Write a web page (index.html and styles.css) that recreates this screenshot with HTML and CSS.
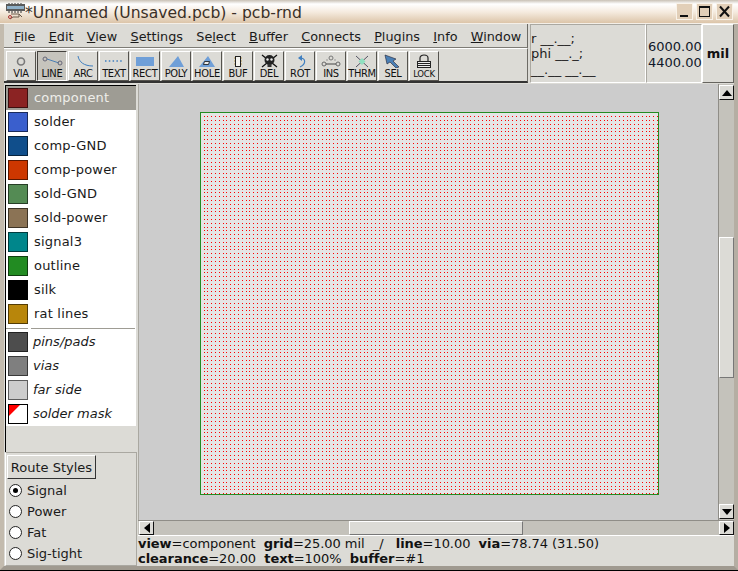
FILE: index.html
```html
<!DOCTYPE html>
<html lang="en">
<head>
<meta charset="utf-8">
<title>pcb-rnd</title>
<link rel="stylesheet" href="styles.css">
</head>
<body>
<div class="window">
  <header class="titlebar">
    <svg class="appicon" width="19" height="17" viewBox="0 0 19 17"><rect x="0" y="1" width="19" height="7" fill="#5a5a5a"/><rect x="1" y="3" width="17" height="3" fill="#8fb0c8"/><path d="M3 1v-1M6 1v-1M9 1v-1M12 1v-1M15 1v-1M3 8v2M6 8v2M9 8v2M12 8v2M15 8v2" stroke="#333"/><path d="M5 11h8v3h-6M7 14l-3 2M13 11l3 3" stroke="#6a5a4a" fill="none"/><circle cx="4" cy="14" r="1.500" fill="none" stroke="#a33"/></svg>
    <span class="wintitle">*Unnamed (Unsaved.pcb) - pcb-rnd</span>
    <div class="winbtns">
      <span class="winbtn"><svg width="17" height="17" viewBox="0 0 17 17"><rect x="4" y="12" width="8" height="2" fill="#111"/></svg></span>
      <span class="winbtn"><svg width="17" height="17" viewBox="0 0 17 17"><rect x="3.500" y="3.500" width="10" height="10" fill="none" stroke="#111"/><rect x="3" y="3" width="11" height="2" fill="#111"/></svg></span>
      <span class="winbtn"><svg width="17" height="17" viewBox="0 0 17 17"><path d="M4 3.500L13 13.500M13 3.500L4 13.500" stroke="#111" stroke-width="2"/></svg></span>
    </div>
  </header>

  <div class="topbar">
    <div class="bars">
      <nav class="menubar">
        <span class="menu"><u>F</u>ile</span>
        <span class="menu"><u>E</u>dit</span>
        <span class="menu"><u>V</u>iew</span>
        <span class="menu"><u>S</u>ettings</span>
        <span class="menu">Se<u>l</u>ect</span>
        <span class="menu"><u>B</u>uffer</span>
        <span class="menu"><u>C</u>onnects</span>
        <span class="menu"><u>P</u>lugins</span>
        <span class="menu"><u>I</u>nfo</span>
        <span class="menu"><u>W</u>indow</span>
      </nav>
      <div class="toolbar">
        <div class="tool"><svg class="ico" width="24" height="14" viewBox="0 0 24 14"><circle cx="12" cy="7.500" r="3.500" fill="none" stroke="#7a7a7a" stroke-width="1.600"/></svg><span class="tlabel">VIA</span></div>
        <div class="tool pressed"><svg class="ico" width="24" height="14" viewBox="0 0 24 14"><path d="M7 5L19 9" stroke="#4a7fb5"/><circle cx="5" cy="5" r="2" fill="none" stroke="#667"/><circle cx="20" cy="9" r="2" fill="none" stroke="#667"/></svg><span class="tlabel">LINE</span></div>
        <div class="tool"><svg class="ico" width="24" height="14" viewBox="0 0 24 14"><path d="M7 2C8 8 13 12 22 12" fill="none" stroke="#3f7fc0"/></svg><span class="tlabel">ARC</span></div>
        <div class="tool"><svg class="ico" width="24" height="14" viewBox="0 0 24 14"><path d="M3 7h19" stroke="#3f7fc0" stroke-dasharray="1.500 2.300" stroke-width="1.500"/></svg><span class="tlabel">TEXT</span></div>
        <div class="tool"><svg class="ico" width="24" height="14" viewBox="0 0 24 14"><rect x="3" y="3" width="18" height="9" fill="#6f9fd8"/></svg><span class="tlabel">RECT</span></div>
        <div class="tool"><svg class="ico" width="24" height="14" viewBox="0 0 24 14"><path d="M5 13L14 2L20 13Z" fill="#6f9fd8"/></svg><span class="tlabel">POLY</span></div>
        <div class="tool"><svg class="ico" width="24" height="14" viewBox="0 0 24 14"><path d="M4 13L13 2L20 13Z" fill="#6f9fd8"/><path d="M9.500 7.500h5l-1 3h-5z" fill="#eee" stroke="#111" stroke-width=".8"/></svg><span class="tlabel">HOLE</span></div>
        <div class="tool"><svg class="ico" width="24" height="14" viewBox="0 0 24 14"><rect x="9.500" y="2.500" width="5" height="10" fill="#f4f4f0" stroke="#222"/><path d="M9 4h-1M9 7h-1M9 10h-1M15 4h1M15 7h1M15 10h1" stroke="#b89a50"/></svg><span class="tlabel">BUF</span></div>
        <div class="tool"><svg class="ico" width="24" height="14" viewBox="0 0 24 14"><path d="M5 1L20 13M20 1L5 13" stroke="#111" stroke-width="1.300"/><circle cx="12.500" cy="6" r="5" fill="#222"/><circle cx="10.500" cy="5.500" r="1.200" fill="#eee"/><circle cx="14.500" cy="5.500" r="1.200" fill="#eee"/><rect x="10.500" y="10" width="4" height="3" fill="#333"/></svg><span class="tlabel">DEL</span></div>
        <div class="tool"><svg class="ico" width="24" height="14" viewBox="0 0 24 14"><path d="M13 4C18 5 18 10 12 13" fill="none" stroke="#3f7fc0" stroke-width="1.200"/><path d="M14 1L10 4L14 7Z" fill="#3f7fc0"/></svg><span class="tlabel">ROT</span></div>
        <div class="tool"><svg class="ico" width="24" height="14" viewBox="0 0 24 14"><circle cx="12" cy="4" r="2" fill="none" stroke="#777"/><circle cx="5" cy="10" r="2" fill="none" stroke="#666"/><circle cx="19" cy="10" r="2" fill="none" stroke="#666"/><path d="M7 10H17" stroke="#444"/><path d="M9 6H7M15 6h2" stroke="#999"/></svg><span class="tlabel">INS</span></div>
        <div class="tool"><svg class="ico" width="24" height="14" viewBox="0 0 24 14"><path d="M6 2L18 13M18 2L6 13" stroke="#445" stroke-width=".9"/><path d="M12 4L15.500 7.500L12 11L8.500 7.500Z" fill="#8fe0c0"/></svg><span class="tlabel">THRM</span></div>
        <div class="tool"><svg class="ico" width="24" height="14" viewBox="0 0 24 14"><path d="M4 1L15 5L12 7L18 13L15 14L9 8L6 10Z" fill="#4a7fb5" stroke="#223" stroke-width=".6"/></svg><span class="tlabel">SEL</span></div>
        <div class="tool"><svg class="ico" width="24" height="14" viewBox="0 0 24 14"><path d="M8 7V4C8 0 16 0 16 4V7" fill="none" stroke="#222" stroke-width="1.200"/><rect x="5.500" y="7.500" width="13" height="6" fill="#eee" stroke="#222"/><path d="M6 9.500h12M6 11.500h12" stroke="#222"/></svg><span class="tlabel small">LOCK</span></div>
      </div>
    </div>
    <div class="routebox">
      <div class="rline">r __.__;</div>
      <div class="rline">phi __._;</div>
      <div class="rline last">__.__ __.__</div>
    </div>
    <div class="coords"><div>6000.00</div><div>4400.00</div></div>
    <div class="unit">mil</div>
  </div>

  <div class="main">
    <aside class="side">
      <div class="layers">
        <ul class="layerlist">
          <li class="layer selected"><span class="sw c1"></span><span class="lname">component</span></li>
          <li class="layer"><span class="sw c2"></span><span class="lname">solder</span></li>
          <li class="layer"><span class="sw c3"></span><span class="lname">comp-GND</span></li>
          <li class="layer"><span class="sw c4"></span><span class="lname">comp-power</span></li>
          <li class="layer"><span class="sw c5"></span><span class="lname">sold-GND</span></li>
          <li class="layer"><span class="sw c6"></span><span class="lname">sold-power</span></li>
          <li class="layer"><span class="sw c7"></span><span class="lname">signal3</span></li>
          <li class="layer"><span class="sw c8"></span><span class="lname">outline</span></li>
          <li class="layer"><span class="sw c9"></span><span class="lname">silk</span></li>
          <li class="layer"><span class="sw c10"></span><span class="lname">rat lines</span></li>
          <li class="sep"><span></span><span></span></li>
          <li class="layer it"><span class="sw c11"></span><span class="lname">pins/pads</span></li>
          <li class="layer it"><span class="sw c12"></span><span class="lname">vias</span></li>
          <li class="layer it"><span class="sw c13"></span><span class="lname">far side</span></li>
          <li class="layer it"><span class="sw c14"></span><span class="lname">solder mask</span></li>
        </ul>
      </div>
      <div class="styles">
        <div class="stylebtn">Route Styles</div>
        <div class="radio on"><span class="dot"></span><span>Signal</span></div>
        <div class="radio"><span class="dot"></span><span>Power</span></div>
        <div class="radio"><span class="dot"></span><span>Fat</span></div>
        <div class="radio"><span class="dot"></span><span>Sig-tight</span></div>
      </div>
    </aside>

    <section class="work">
      <div class="viewrow">
        <div class="viewport"><canvas id="board" class="board" width="459" height="383"></canvas></div>
        <div class="vscroll">
          <span class="sbtn"><svg width="10" height="6" viewBox="0 0 10 6"><path d="M5 0L10 6H0Z" fill="#000"/></svg></span>
          <div class="vtrough"><div class="vthumb"></div></div>
          <span class="sbtn"><svg width="10" height="6" viewBox="0 0 10 6"><path d="M5 6L10 0H0Z" fill="#000"/></svg></span>
        </div>
      </div>
      <div class="hscroll">
        <span class="sbtn"><svg width="6" height="10" viewBox="0 0 6 10"><path d="M0 5L6 0V10Z" fill="#000"/></svg></span>
        <div class="htrough"><div class="hthumb"></div></div>
        <span class="sbtn"><svg width="6" height="10" viewBox="0 0 6 10"><path d="M6 5L0 0V10Z" fill="#000"/></svg></span>
      </div>
      <div class="status">
        <div><b>view</b>=component&nbsp; <b>grid</b>=25.00 mil&nbsp; _/&nbsp; &nbsp;<b>line</b>=10.00&nbsp; <b>via</b>=78.74 (31.50)</div>
        <div><b>clearance</b>=20.00&nbsp; <b>text</b>=100%&nbsp; <b>buffer</b>=#1</div>
      </div>
    </section>
  </div>
</div>
<script src="board.js"></script>
</body>
</html>
```
FILE: styles.css
```css
* { box-sizing: border-box; }
html, body { margin: 0; padding: 0; }
body { width: 738px; height: 571px; overflow: hidden; background: #000; font-family: "DejaVu Sans", sans-serif; color: #111; }
.window { width: 738px; height: 570px; background: #dcdbd6; border-left: 4px solid #c3bbae; border-right: 4px solid #b5aea3; border-bottom: 4px solid #a09a90; display: flex; flex-direction: column; }

.titlebar { height: 24px; margin: 0 -4px; padding: 0 5px 0 6px; display: flex; align-items: center; background: linear-gradient(#c9c1b5 0, #fff 4px, #f5ebdf 12px, #dcc5a9 100%); border-bottom: 1px solid #f4efe8; }
.appicon { flex: none; }
.wintitle { font-size: 15.600px; color: #3b3027; white-space: nowrap; flex: 1; padding-top: 2px; }
.winbtns { display: flex; gap: 3px; }
.winbtn { width: 17px; height: 17px; display: block; background: #e2cfb8; box-shadow: inset 0 0 0 1px #f9f3ea; }
.winbtn svg { display: block; }

.topbar { height: 59px; display: flex; }
.bars { width: 524px; margin-right: 2px; display: flex; flex-direction: column; }
.menubar { height: 24px; display: flex; align-items: center; gap: 13.300px; padding: 2px 0 0 10px; border-bottom: 1px solid #7d7b75; border-right: 1px solid #6d6b65; font-size: 12.800px; color: #1a1a1a; white-space: nowrap; }
.menu { display: block; }
.toolbar { height: 35px; display: flex; gap: 1px; padding: 2px 0 0 2px; background: #dcdbd6; border-top: 1px solid #fff; border-bottom: 2px solid #333; border-right: 1px solid #6d6b65; }
.tool { width: 30px; height: 30px; display: flex; flex-direction: column; align-items: center; background: #dcdbd6; border: 1px solid; border-color: #fff #55534e #55534e #fff; padding-top: 2px; }
.tool.pressed { background: #c6c4bd; border-color: #44423e #fff #fff #44423e; }
.ico { display: block; flex: none; }
.tlabel { font-family: "DejaVu Sans", sans-serif; font-stretch: condensed; font-size: 11px; line-height: 11px; color: #111; letter-spacing: -0.3px; }
.tlabel.small { font-size: 9.500px; }

.routebox { width: 116px; padding: 6px 0 0 0; border: 1px solid #fff; border-top-color: #aaa8a1; border-left-color: #aaa8a1; font-size: 13px; color: #1c1c1c; }
.rline { height: 15px; line-height: 15px; white-space: nowrap; }
.rline.last { margin-top: 1px; }
.coords { width: 56px; padding: 14px 0 0 1px; border: 1px solid #fff; border-top-color: #aaa8a1; border-left-color: #aaa8a1; font-size: 13px; line-height: 16px; color: #10182a; }
.unit { flex: 1; display: flex; align-items: center; justify-content: center; font-weight: 700; font-size: 13px; border: 1px solid; border-color: #fff #66645f #66645f #fff; color: #111; }

.main { flex: 1; display: flex; min-height: 0; }
.side { width: 134px; flex: none; display: flex; flex-direction: column; }
.layers { height: 367px; margin: 2px 2px 0 1px; border-left: 1px solid #000; border-top: 1px solid #000; }
.layerlist { list-style: none; margin: 0; padding: 0; background: #fff; font-size: 13px; color: #1a1a1a; }
.layer { height: 24px; display: flex; align-items: center; gap: 6px; padding-left: 2px; letter-spacing: 0.2px; }
.lname { display: block; padding-bottom: 2px; }
.layer.selected { background: #9e9c94; color: #eeeeea; }
.layer.it { font-style: italic; gap: 5px; letter-spacing: 0; }
.sep { height: 4px; display: flex; align-items: flex-start; gap: 3px; padding-top: 2px; }
.sep span { display: block; height: 1px; background: #9e9c94; }
.sep span:first-child { width: 22px; }
.sep span:last-child { width: 104px; }
.sw { width: 20px; height: 20px; flex: none; display: block; border: 1px solid rgba(0,0,0,.55); }
.c1 { background: #8b2323; }
.c2 { background: #3a5fcd; }
.c3 { background: #104e8b; }
.c4 { background: #cd3700; }
.c5 { background: #548b54; }
.c6 { background: #8b7355; }
.c7 { background: #00868b; }
.c8 { background: #228b22; }
.c9 { background: #000; }
.c10 { background: #b8860b; }
.c11 { background: #4d4d4d; }
.c12 { background: #7f7f7f; }
.c13 { background: #cccccc; }
.c14 { background: linear-gradient(135deg, #f00 0, #f00 30%, #fff 31%); border-color: #000; }

.styles { flex: 1; margin: 0 1px 0 1px; padding: 2px 1px 1px; border: 1px solid #fff; border-bottom-color: #aaa8a1; border-right-color: #aaa8a1; border-top-color: #aaa8a1; font-size: 13px; color: #1a1a1a; }
.stylebtn { width: 89px; height: 24px; display: flex; align-items: center; justify-content: center; border: 1px solid; border-color: #fff #333 #333 #fff; white-space: nowrap; margin-bottom: 1px; }
.radio { height: 21px; display: flex; align-items: center; gap: 5px; padding-left: 2px; }
.dot { width: 13px; height: 13px; flex: none; display: flex; align-items: center; justify-content: center; border-radius: 50%; border: 1px solid #222; background: #fff; }
.radio.on .dot::after { content: ""; width: 5px; height: 5px; border-radius: 50%; background: #000; }

.work { flex: 1; display: flex; flex-direction: column; min-width: 0; margin-top: 1px; }
.viewrow { height: 437px; display: flex; }
.viewport { width: 580px; background: #cccccc; padding: 28px 0 0 62px; border-left: 1px solid #aaa8a1; }
.board { display: block; width: 459px; height: 383px; margin-left: -1px; }
.vscroll { flex: 1; display: flex; flex-direction: column; padding: 1px 0; background: #c4c2bb; border-left: 1px solid #8f8d87; }
.sbtn { width: 15px; height: 15px; flex: none; display: flex; align-items: center; justify-content: center; background: #dcdbd6; border: 1px solid; border-color: #fff #111 #111 #fff; }
.vtrough { flex: 1; display: flex; flex-direction: column; padding-top: 137px; }
.vthumb { height: 141px; background: #dcdbd6; border: 1px solid; border-color: #fff #777 #777 #fff; }
.hscroll { height: 16px; display: flex; background: #c4c2bb; border-top: 1px solid #8f8d87; border-bottom: 1px solid #fff; padding-left: 1px; }
.hscroll .sbtn { height: 14px; }
.htrough { flex: 1; padding-left: 195px; }
.hthumb { width: 174px; height: 100%; background: #dcdbd6; border: 1px solid; border-color: #fff #777 #777 #fff; }
.status { flex: 1; font-size: 13px; line-height: 15px; color: #111; white-space: nowrap; letter-spacing: -0.05px; }
.status b { font-weight: 700; }
```
FILE: board.js
```js
(function () {
  var c = document.getElementById('board');
  var g = c.getContext('2d');
  var w = c.width, h = c.height, step = 3.81, ox = -0.2, oy = 0.3;
  g.fillStyle = '#e5e5e5';
  g.fillRect(0, 0, w, h);
  g.fillStyle = '#ff0000';
  for (var i = 1; i * step + ox < w - 1.5; i++) {
    for (var j = 1; j * step + oy < h - 1.5; j++) {
      g.fillRect(Math.round(i * step + ox), Math.round(j * step + oy), 1, 1);
    }
  }
  g.fillStyle = '#228b22';
  g.fillRect(0, 0, w, 1);
  g.fillRect(0, h - 1, w, 1);
  g.fillRect(0, 0, 1, h);
  g.fillRect(w - 1, 0, 1, h);
})();
```
